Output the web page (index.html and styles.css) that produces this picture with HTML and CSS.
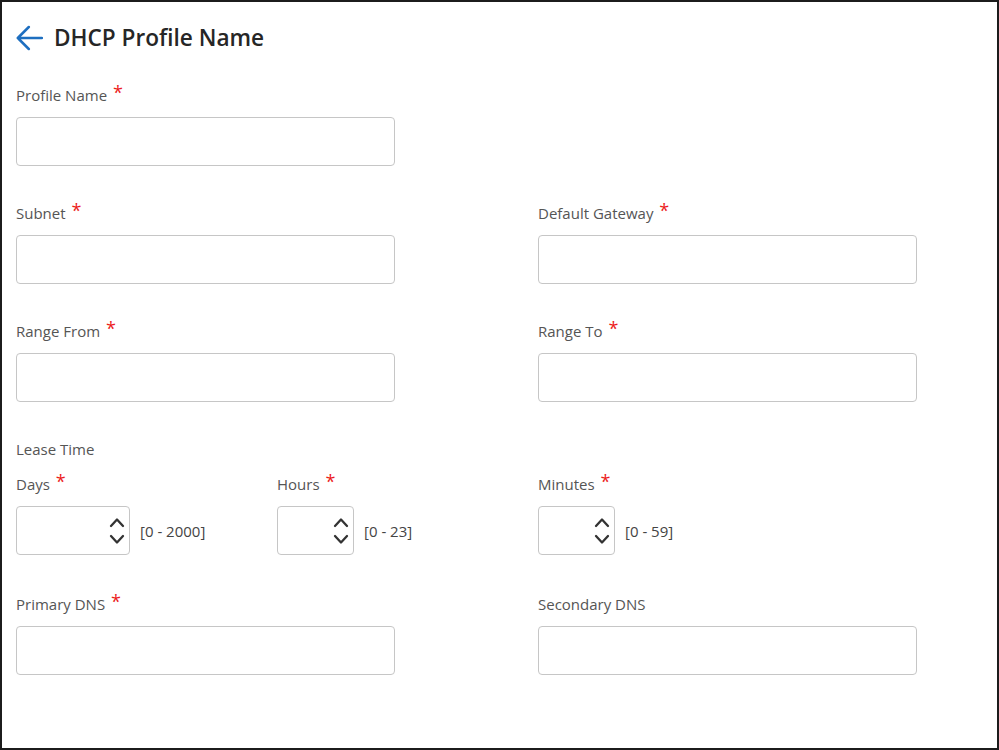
FILE: index.html
```html
<!DOCTYPE html>
<html>
<head>
  <meta charset="utf-8">
  <title>DHCP Profile Name</title>
  <link rel="stylesheet" href="styles.css">
</head>
<body>
  <div class="page">
    <header class="head">
      <a class="back" href="#">
        <svg width="27" height="26" viewBox="0 0 27 26">
          <path d="M1.8 13 H26 M1.8 13 L12.8 2 M1.8 13 L12.8 24" fill="none" stroke="#1e6fc0" stroke-width="2.5" stroke-linecap="round" stroke-linejoin="round"/>
        </svg>
      </a>
      <h1>DHCP Profile Name</h1>
    </header>

    <form class="form">
      <div class="row">
        <div class="field">
          <label>Profile Name <span class="req">*</span></label>
          <input class="text" type="text">
        </div>
      </div>

      <div class="row">
        <div class="field">
          <label>Subnet <span class="req">*</span></label>
          <input class="text" type="text">
        </div>
        <div class="field">
          <label>Default Gateway <span class="req">*</span></label>
          <input class="text" type="text">
        </div>
      </div>

      <div class="row">
        <div class="field">
          <label>Range From <span class="req">*</span></label>
          <input class="text" type="text">
        </div>
        <div class="field">
          <label>Range To <span class="req">*</span></label>
          <input class="text" type="text">
        </div>
      </div>

      <div class="lease">
        <div class="lease-title">Lease Time</div>
        <div class="row three">
          <div class="field">
            <label>Days <span class="req">*</span></label>
            <div class="num-line">
              <div class="num wide">
                <input type="text">
                <span class="spin">
                  <svg width="16" height="28" viewBox="0 0 16 28">
                    <path d="M2 9 L8 2.5 L14 9 M2 19 L8 25.5 L14 19" fill="none" stroke="#333" stroke-width="2.3" stroke-linecap="round" stroke-linejoin="round"/>
                  </svg>
                </span>
              </div>
              <span class="range">[0 - 2000]</span>
            </div>
          </div>
          <div class="field">
            <label>Hours <span class="req">*</span></label>
            <div class="num-line">
              <div class="num">
                <input type="text">
                <span class="spin">
                  <svg width="16" height="28" viewBox="0 0 16 28">
                    <path d="M2 9 L8 2.5 L14 9 M2 19 L8 25.5 L14 19" fill="none" stroke="#333" stroke-width="2.3" stroke-linecap="round" stroke-linejoin="round"/>
                  </svg>
                </span>
              </div>
              <span class="range">[0 - 23]</span>
            </div>
          </div>
          <div class="field">
            <label>Minutes <span class="req">*</span></label>
            <div class="num-line">
              <div class="num">
                <input type="text">
                <span class="spin">
                  <svg width="16" height="28" viewBox="0 0 16 28">
                    <path d="M2 9 L8 2.5 L14 9 M2 19 L8 25.5 L14 19" fill="none" stroke="#333" stroke-width="2.3" stroke-linecap="round" stroke-linejoin="round"/>
                  </svg>
                </span>
              </div>
              <span class="range">[0 - 59]</span>
            </div>
          </div>
        </div>
      </div>

      <div class="row">
        <div class="field">
          <label>Primary DNS <span class="req">*</span></label>
          <input class="text" type="text">
        </div>
        <div class="field">
          <label>Secondary DNS</label>
          <input class="text" type="text">
        </div>
      </div>
    </form>
  </div>
</body>
</html>
```

FILE: styles.css
```css
body {
  margin: 0;
  padding: 0;
  background: #fff;
}

.page {
  box-sizing: border-box;
  width: 999px;
  height: 750px;
  border: 2px solid #1c1c1c;
  padding: 20px 14px 0;
  font-family: "Open Sans", "Noto Sans", sans-serif;
  color: #555;
}

.head {
  display: flex;
  align-items: center;
  gap: 11px;
  height: 32px;
}

.back {
  display: flex;
  align-items: center;
}

.head h1 {
  margin: 0;
  font-size: 22.6px;
  font-weight: 600;
  line-height: 32px;
  color: #262626;
}

.form {
  margin-top: 31px;
}

.row {
  display: grid;
  grid-template-columns: 379px 379px;
  column-gap: 143px;
  margin-bottom: 37px;
}

.row.three {
  grid-template-columns: 261px 261px 261px;
  column-gap: 0;
  margin-bottom: 39px;
}

.field label {
  display: block;
  font-size: 15px;
  line-height: 20px;
  color: #555;
  margin-bottom: 12px;
}

.req {
  color: #ec1c1c;
  font-size: 18px;
  line-height: 0;
  margin-left: 2px;
  vertical-align: 2px;
}

.text {
  box-sizing: border-box;
  display: block;
  width: 100%;
  height: 49px;
  border: 1px solid #c6c6c6;
  border-radius: 4px;
  padding: 0 10px;
  font: inherit;
  outline: none;
}

.lease-title {
  font-size: 15px;
  line-height: 20px;
  color: #555;
  margin-bottom: 15px;
}

.num-line {
  display: flex;
  align-items: center;
  gap: 10px;
}

.num {
  box-sizing: border-box;
  display: flex;
  align-items: center;
  width: 77px;
  height: 49px;
  border: 1px solid #c6c6c6;
  border-radius: 4px;
  padding-right: 4px;
}

.num.wide {
  width: 114px;
}

.num input {
  flex: 1;
  min-width: 0;
  border: 0;
  outline: none;
  background: transparent;
  font: inherit;
  padding: 0 8px;
}

.spin {
  display: flex;
}

.range {
  font-size: 15px;
  color: #444;
}
```
